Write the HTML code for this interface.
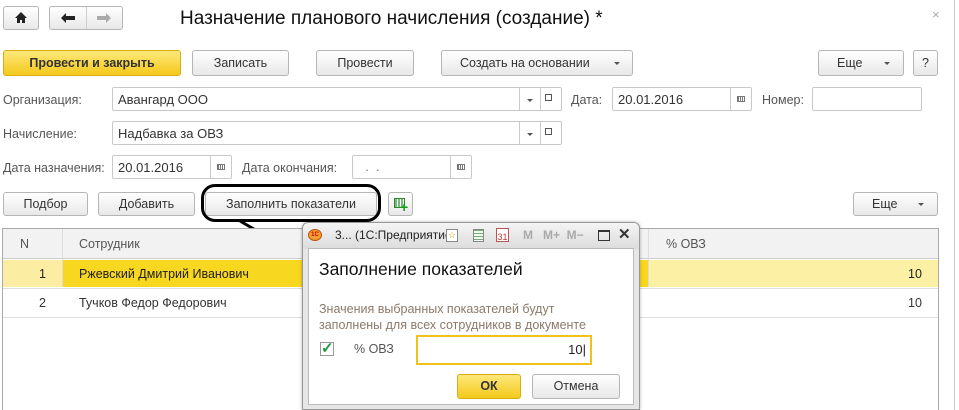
<!DOCTYPE html>
<html><head><meta charset="utf-8"><style>
*{box-sizing:border-box;margin:0;padding:0}
body{width:959px;height:410px;background:#fff;font-family:"Liberation Sans",Arial,sans-serif;font-size:12px;color:#333;position:relative;overflow:hidden}
.a{position:absolute}
.btn{position:absolute;border:1px solid #b5b5b5;border-radius:3px;background:linear-gradient(#fff,#e8e8e8);text-align:center;color:#333;font-size:12.5px;line-height:22px;height:24px}
.inp{position:absolute;border:1px solid #c8c8c8;border-radius:2px;background:#fff;height:24px;font-size:13px;line-height:22px;padding-left:5px;color:#333}
.lbl{position:absolute;font-size:12.5px;color:#555;line-height:24px}
.cal{position:absolute;width:8px;height:6px;border:1px solid #777;background:repeating-linear-gradient(90deg,#777 0 1px,#fff 1px 2px)}
.dd{position:absolute;width:0;height:0;border-left:3px solid transparent;border-right:3px solid transparent;border-top:3px solid #555}
.t{position:absolute;font-size:12.5px}
</style></head><body>
<div class="a" style="left:954px;top:0;width:1px;height:410px;background:#ccc"></div>
<div class="btn" style="left:3px;top:6px;width:36px;height:24px"></div>
<svg class="a" style="left:14px;top:11px" width="14" height="13"><path d="M7 1 L1 7 H3 V12 H6 V9 H8 V12 H11 V7 H13 Z" fill="#222"/></svg>
<div class="btn" style="left:49px;top:6px;width:74px;height:24px"></div>
<div class="a" style="left:86px;top:7px;width:1px;height:22px;background:#ccc"></div>
<svg class="a" style="left:60px;top:12px" width="16" height="12"><path d="M1 6 L6 1 V4 H15 V8 H6 V11 Z" fill="#222"/></svg>
<svg class="a" style="left:96px;top:12px" width="16" height="12"><path d="M15 6 L10 1 V4 H1 V8 H10 V11 Z" fill="#aaa"/></svg>
<div class="a" style="left:180px;top:8px;font-size:19px;color:#111">Назначение планового начисления (создание) *</div>
<div class="a" style="left:932px;top:7px;font-size:13px;color:#aaa">×</div>

<div class="btn" style="left:3px;top:50px;width:178px;height:26px;line-height:25px;background:linear-gradient(#fde87a,#f4c91b);border-color:#d9ad13;font-weight:bold;color:#333">Провести и закрыть</div>
<div class="btn" style="left:192px;top:50px;width:97px;height:26px;line-height:25px">Записать</div>
<div class="btn" style="left:316px;top:50px;width:98px;height:26px;line-height:25px">Провести</div>
<div class="btn" style="left:441px;top:50px;width:192px;height:26px;line-height:25px;text-align:left;padding-left:18px">Создать на основании</div>
<div class="dd" style="left:614px;top:62px"></div>
<div class="btn" style="left:818px;top:50px;width:86px;height:26px;line-height:25px;text-align:left;padding-left:18px">Еще</div>
<div class="dd" style="left:884px;top:62px"></div>
<div class="btn" style="left:913px;top:50px;width:25px;height:26px;line-height:25px">?</div>

<div class="lbl" style="left:3px;top:88px">Организация:</div>
<div class="inp" style="left:112px;top:87px;width:450px;line-height:23px">Авангард ООО</div>
<div class="a" style="left:519px;top:88px;width:1px;height:22px;background:#ccc"></div>
<div class="a" style="left:540px;top:88px;width:1px;height:22px;background:#ccc"></div>
<div class="dd" style="left:527px;top:99px"></div>
<div class="a" style="left:545px;top:94px;width:7px;height:7px;border:1px solid #555"></div>
<div class="lbl" style="left:571px;top:88px">Дата:</div>
<div class="inp" style="left:612px;top:87px;width:140px;line-height:23px">20.01.2016</div>
<div class="a" style="left:730px;top:88px;width:1px;height:22px;background:#ccc"></div>
<div class="cal" style="left:737px;top:96px"></div>
<div class="lbl" style="left:762px;top:88px">Номер:</div>
<div class="inp" style="left:812px;top:87px;width:110px"></div>

<div class="lbl" style="left:3px;top:122px">Начисление:</div>
<div class="inp" style="left:112px;top:121px;width:450px;line-height:23px">Надбавка за ОВЗ</div>
<div class="a" style="left:519px;top:122px;width:1px;height:22px;background:#ccc"></div>
<div class="a" style="left:540px;top:122px;width:1px;height:22px;background:#ccc"></div>
<div class="dd" style="left:527px;top:133px"></div>
<div class="a" style="left:545px;top:128px;width:7px;height:7px;border:1px solid #555"></div>

<div class="lbl" style="left:3px;top:156px">Дата назначения:</div>
<div class="inp" style="left:112px;top:155px;width:120px;line-height:23px">20.01.2016</div>
<div class="a" style="left:210px;top:156px;width:1px;height:22px;background:#ccc"></div>
<div class="cal" style="left:217px;top:164px"></div>
<div class="lbl" style="left:242px;top:156px">Дата окончания:</div>
<div class="inp" style="left:352px;top:155px;width:120px;color:#777">&nbsp;&nbsp;.&nbsp;&nbsp;.</div>
<div class="a" style="left:450px;top:156px;width:1px;height:22px;background:#ccc"></div>
<div class="cal" style="left:457px;top:164px"></div>

<div class="btn" style="left:3px;top:192px;width:85px;height:24px;line-height:23px">Подбор</div>
<div class="btn" style="left:98px;top:192px;width:97px;height:24px;line-height:23px">Добавить</div>
<div class="btn" style="left:205px;top:192px;width:172px;height:24px;line-height:23px">Заполнить показатели</div>
<div class="a" style="left:201px;top:184px;width:180px;height:38px;border:3px solid #000;border-radius:14px"></div>
<div class="btn" style="left:388px;top:192px;width:25px;height:24px"></div>
<div class="a" style="left:394px;top:198px;width:11px;height:10px;border:1px solid #2a8a2a;background:repeating-linear-gradient(90deg,#7cb87c 0 2px,#fff 2px 3px)"></div>
<div class="a" style="left:400px;top:199px;color:#1a9a1a;font-weight:bold;font-size:14px">+</div>
<div class="btn" style="left:853px;top:192px;width:85px;height:24px;line-height:23px;text-align:left;padding-left:18px">Еще</div>
<div class="dd" style="left:918px;top:203px"></div>
<svg class="a" style="left:0;top:0" width="959" height="410"><line x1="240" y1="221" x2="304" y2="258" stroke="#000" stroke-width="3"/></svg>

<div class="a" style="left:2px;top:228px;width:937px;height:182px;border:1px solid #aaa;border-bottom:none"></div>
<div class="a" style="left:3px;top:229px;width:935px;height:30px;background:#f2f2f2;border-bottom:1px solid #ccc"></div>
<div class="a" style="left:62px;top:229px;width:1px;height:58px;background:#ddd"></div>
<div class="a" style="left:648px;top:229px;width:1px;height:58px;background:#ddd"></div>
<div class="t" style="left:20px;top:237px;color:#555">N</div>
<div class="t" style="left:79px;top:237px;color:#555">Сотрудник</div>
<div class="t" style="left:666px;top:237px;color:#555">% ОВЗ</div>
<div class="a" style="left:3px;top:260px;width:59px;height:27px;background:#fbeea3"></div>
<div class="a" style="left:63px;top:260px;width:585px;height:27px;background:#f8d720"></div>
<div class="a" style="left:649px;top:260px;width:289px;height:27px;background:#fbf0a3"></div>
<div class="a" style="left:3px;top:288px;width:935px;height:1px;background:#ddd"></div>
<div class="a" style="left:3px;top:317px;width:935px;height:1px;background:#ddd"></div>
<div class="t" style="left:39px;top:267px;color:#222">1</div>
<div class="t" style="left:79px;top:267px;color:#222">Ржевский Дмитрий Иванович</div>
<div class="t" style="left:908px;top:267px;color:#222">10</div>
<div class="t" style="left:39px;top:296px;color:#333">2</div>
<div class="t" style="left:79px;top:296px;color:#333">Тучков Федор Федорович</div>
<div class="t" style="left:908px;top:296px;color:#333">10</div>

<div class="a" style="left:302px;top:222px;width:338px;height:188px;border:1px solid #999;border-radius:6px 6px 0 0;background:linear-gradient(#f4f4f4,#dcdcdc 26px,#e6e6e6 26px);box-shadow:0 0 3px rgba(0,0,0,.3)"></div>
<div class="a" style="left:308px;top:248px;width:326px;height:157px;background:#fff;border:1px solid #bbb"></div>
<div class="a" style="left:308px;top:229px;width:14px;height:12px;border-radius:50%;background:#f0a030;border:1px solid #c05010;font-size:6px;color:#c00;text-align:center;line-height:10px;font-weight:bold">1С</div>
<div class="a" style="left:335px;top:228px;font-size:12px;color:#222">3...&nbsp;(1С:Предприятие</div>
<div class="a" style="left:446px;top:229px;width:12px;height:13px;border:1px solid #888;background:#fff;font-size:9px;text-align:center;color:#c90">☆</div>
<div class="a" style="left:473px;top:229px;width:11px;height:13px;border:1px solid #888;background:repeating-linear-gradient(#7a7 0 1px,#efe 1px 3px)"></div>
<div class="a" style="left:496px;top:228px;width:13px;height:14px;border:1px solid #b55;background:#fff;font-size:9px;color:#c33;text-align:center;line-height:16px">31</div>
<div class="a" style="left:523px;top:228px;font-size:12px;font-weight:bold;color:#aaa">M&nbsp;&nbsp;&nbsp;M+&nbsp;&nbsp;M−</div>
<div class="a" style="left:598px;top:230px;width:12px;height:11px;border:1px solid #333;border-top-width:2px"></div>
<div class="a" style="left:618px;top:225px;font-size:15px;font-weight:bold;color:#333">✕</div>
<div class="a" style="left:319px;top:259px;font-size:17.5px;color:#111">Заполнение показателей</div>
<div class="a" style="left:319px;top:301px;font-size:12.5px;color:#8a7a6a;line-height:16px">Значения выбранных показателей будут<br>заполнены для всех сотрудников в документе</div>
<div class="a" style="left:320px;top:342px;width:14px;height:14px;border:1px solid #999;background:#fff;color:#1a9a3a;font-size:15px;line-height:12px;font-weight:bold">✓</div>
<div class="a" style="left:354px;top:342px;font-size:12.5px;color:#555">% ОВЗ</div>
<div class="a" style="left:416px;top:335px;width:176px;height:30px;border:2px solid #f1c21a;background:#fff;text-align:right;padding-right:4px;font-size:13px;line-height:26px;color:#222">10|</div>
<div class="btn" style="left:457px;top:374px;width:64px;height:25px;line-height:23px;background:linear-gradient(#fde87a,#f4c91b);border-color:#d9ad13;font-weight:bold">ОК</div>
<div class="btn" style="left:532px;top:374px;width:88px;height:25px;line-height:23px">Отмена</div>
</body></html>
